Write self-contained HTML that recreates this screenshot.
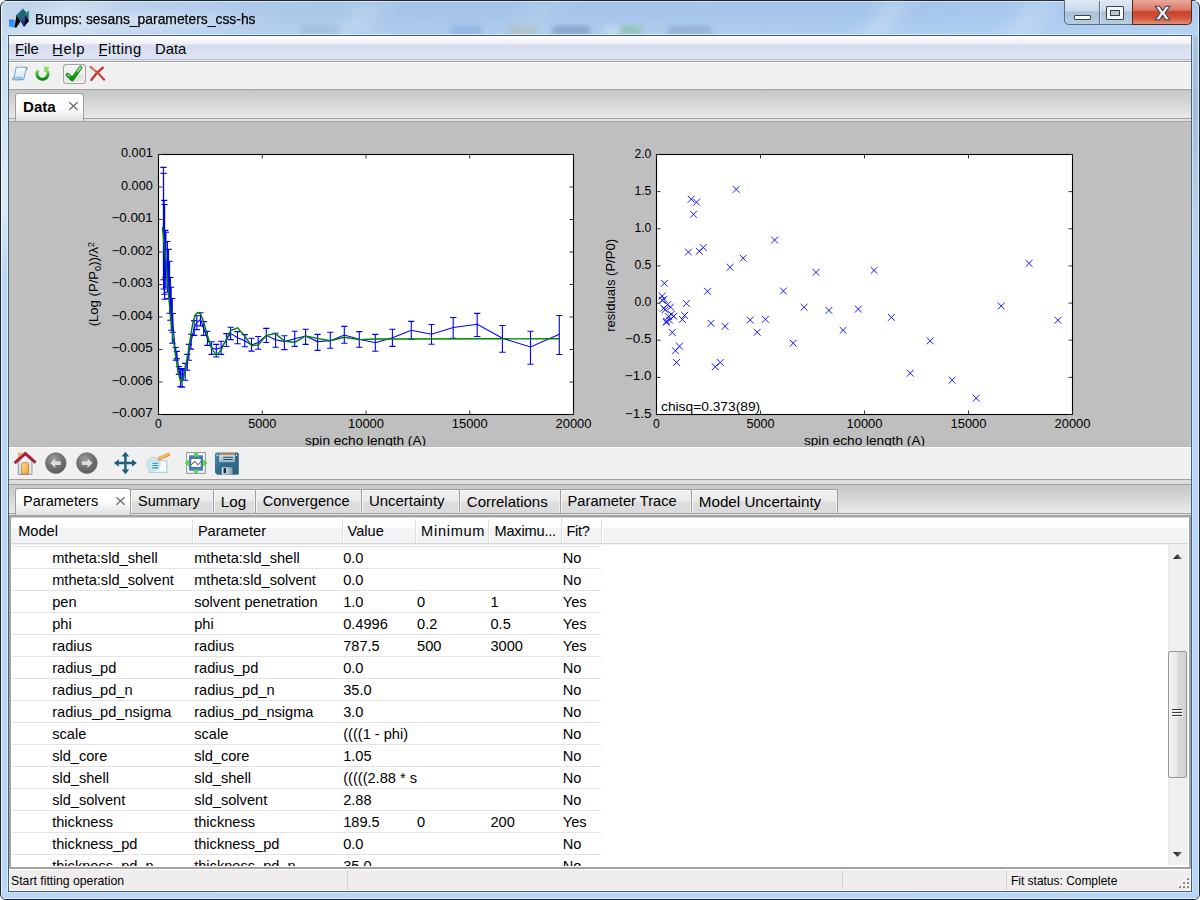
<!DOCTYPE html>
<html><head><meta charset="utf-8"><style>
*{margin:0;padding:0;box-sizing:border-box}
html,body{width:1200px;height:900px;overflow:hidden;background:#fff}
body{position:relative;font-family:"Liberation Sans",sans-serif;color:#000}
.a{position:absolute}
.t{position:absolute;white-space:nowrap;line-height:1}
u{text-decoration:none;border-bottom:1px solid #000;display:inline-block;line-height:1;padding-bottom:0}
</style></head>
<body>
<div class="a" style="left:0px;top:0px;width:1200px;height:900px;background:linear-gradient(90deg,#c6daef 0px,#bfd6ef 120px,#b0cdee 260px,#a7c7eb 420px,#a9c9ed 700px,#a8c9ee 900px,#afd0f3 1200px);border:1px solid #1b2631;border-radius:7px 7px 6px 6px"></div>
<div class="a" style="left:1px;top:1px;width:1198px;height:34px;background:linear-gradient(180deg,rgba(20,50,90,0.03) 0,rgba(20,50,90,0.02) 40%,rgba(255,255,255,0.10) 100%);border-radius:6px 6px 0 0"></div>
<div class="a" style="left:1px;top:36px;width:1198px;height:863px;background:linear-gradient(90deg,#b9d7f6,#b7d7f9);border-radius:0 0 5px 5px"></div>
<div class="a" style="left:2px;top:36px;width:6px;height:240px;background:linear-gradient(180deg,#c4dcf2 0,#d2e5f6 40%,#dbeaf7 70%,#b9d7f6 100%)"></div>
<div class="a" style="left:1193px;top:36px;width:5px;height:240px;background:linear-gradient(180deg,#a9c6e4 0,#9fbcda 30%,#b0cbe6 60%,#b7d7f9 100%)"></div>
<div class="a" style="left:7px;top:36px;width:1px;height:856px;background:rgba(230,242,253,0.7)"></div>
<div class="a" style="left:1192px;top:36px;width:1px;height:856px;background:rgba(230,242,253,0.6)"></div>
<div class="a" style="left:8px;top:892px;width:1184px;height:1px;background:rgba(230,242,253,0.6)"></div>
<div class="a" style="left:20px;top:2px;width:90px;height:33px;background:linear-gradient(90deg,rgba(255,255,255,0),rgba(255,255,255,0.3),rgba(255,255,255,0));transform:skewX(-35deg);filter:blur(4px)"></div>
<div class="a" style="left:330px;top:2px;width:60px;height:33px;background:linear-gradient(90deg,rgba(255,255,255,0),rgba(255,255,255,0.18),rgba(255,255,255,0));transform:skewX(-35deg);filter:blur(4px)"></div>
<div class="a" style="left:500px;top:2px;width:70px;height:33px;background:linear-gradient(90deg,rgba(255,255,255,0),rgba(255,255,255,0.12),rgba(255,255,255,0));transform:skewX(-35deg);filter:blur(4px)"></div>
<div class="a" style="left:860px;top:2px;width:50px;height:33px;background:linear-gradient(90deg,rgba(255,255,255,0),rgba(255,255,255,0.22),rgba(255,255,255,0));transform:skewX(-35deg);filter:blur(4px)"></div>
<div class="a" style="left:1000px;top:2px;width:60px;height:33px;background:linear-gradient(90deg,rgba(255,255,255,0),rgba(255,255,255,0.2),rgba(255,255,255,0));transform:skewX(-35deg);filter:blur(4px)"></div>
<div class="a" style="left:30px;top:8px;width:240px;height:24px;background:radial-gradient(ellipse at center,rgba(255,255,255,0.35),rgba(255,255,255,0) 70%)"></div>
<div class="a" style="left:2px;top:1px;width:1196px;height:1px;background:rgba(255,255,255,0.55)"></div>
<div class="a" style="left:1px;top:6px;width:1px;height:888px;background:rgba(255,255,255,0.8)"></div>
<div class="a" style="left:1198px;top:6px;width:1px;height:888px;background:rgba(255,255,255,0.55)"></div>
<div class="a" style="left:4px;top:898px;width:1192px;height:1px;background:rgba(255,255,255,0.6)"></div>
<div class="a" style="left:300px;top:26px;width:40px;height:9px;background:rgba(70,100,150,0.14);filter:blur(2.5px);border-radius:4px"></div>
<div class="a" style="left:450px;top:26px;width:32px;height:9px;background:rgba(60,110,200,0.22);filter:blur(2.5px);border-radius:4px"></div>
<div class="a" style="left:507px;top:26px;width:30px;height:9px;background:rgba(150,160,90,0.22);filter:blur(2.5px);border-radius:4px"></div>
<div class="a" style="left:552px;top:26px;width:38px;height:9px;background:rgba(50,80,130,0.30);filter:blur(2.5px);border-radius:4px"></div>
<div class="a" style="left:605px;top:26px;width:38px;height:9px;background:rgba(230,240,245,0.35);filter:blur(2.5px);border-radius:4px"></div>
<div class="a" style="left:620px;top:26px;width:22px;height:9px;background:rgba(40,150,60,0.30);filter:blur(2.5px);border-radius:4px"></div>
<div class="a" style="left:667px;top:26px;width:45px;height:9px;background:rgba(70,90,120,0.22);filter:blur(2.5px);border-radius:4px"></div>
<div class="a" style="left:9px;top:34px;width:1182px;height:1px;background:rgba(225,240,252,0.7)"></div>
<div class="a" style="left:8px;top:35px;width:1184px;height:857px;background:#f0f0f0;border:1px solid #4e5e6e"></div>
<div class="t" style="left:35px;top:10.8px;font-size:15px;transform:scaleX(0.925);transform-origin:0 0;color:#000;-webkit-text-stroke:0.25px #000">Bumps: sesans_parameters_css-hs</div>
<div class="a" style="left:9px;top:36px;width:1182px;height:23px;background:linear-gradient(180deg,#ffffff 0px,#eceff8 8px,#d6dcef 9px,#dee3f4 22px)"></div>
<div class="a" style="left:9px;top:59px;width:1182px;height:1px;background:#b8bfd6"></div>
<div class="a" style="left:9px;top:60px;width:1182px;height:1px;background:#e6e6e6"></div>
<div class="a" style="left:9px;top:61px;width:1182px;height:1px;background:#a0a0a0"></div>
<div class="a" style="left:9px;top:62px;width:1182px;height:1px;background:#ffffff"></div>
<div class="t" style="left:15px;top:41.96px;font-size:14.8px;letter-spacing:0px">File</div>
<div class="a" style="left:15.5px;top:55px;width:8px;height:1px;background:#000"></div>
<div class="t" style="left:52px;top:41.96px;font-size:14.8px;letter-spacing:0.7px">Help</div>
<div class="a" style="left:52.5px;top:55px;width:10px;height:1px;background:#000"></div>
<div class="t" style="left:98.5px;top:41.96px;font-size:14.8px;letter-spacing:0.4px">Fitting</div>
<div class="a" style="left:99.0px;top:55px;width:8px;height:1px;background:#000"></div>
<div class="t" style="left:155px;top:41.96px;font-size:14.8px;letter-spacing:0px">Data</div>
<div class="a" style="left:9px;top:88px;width:1182px;height:1px;background:#f6f6f6"></div>
<div class="a" style="left:9px;top:89px;width:1182px;height:1px;background:#a0a0a0"></div>
<div class="a" style="left:63px;top:64px;width:23px;height:20px;border:1px solid #9a9a9a;border-radius:3px;background:linear-gradient(180deg,#fafafa 0,#f0f0f0 50%,#e0e0e0 51%,#ececec 100%)"></div>
<div class="a" style="left:9px;top:90px;width:1182px;height:28px;background:linear-gradient(180deg,#c6c6c6,#e9e9e9)"></div>
<div class="a" style="left:9px;top:118px;width:1182px;height:1px;background:#a0a0a0"></div>
<div class="a" style="left:9px;top:119px;width:1182px;height:2px;background:#e2e2e2"></div>
<div class="a" style="left:9px;top:121px;width:1182px;height:1px;background:#a3a3a3"></div>
<div class="a" style="left:15px;top:93px;width:69px;height:28px;border:1px solid #a0a0a0;border-bottom:none;border-radius:3px 3px 0 0;background:linear-gradient(180deg,#ffffff 0,#ffffff 50%,#e2e2e2 100%)"></div>
<div class="t" style="left:23px;top:98.62px;font-size:15.1px;font-weight:bold">Data</div>
<div class="a" style="left:9px;top:122px;width:1182px;height:324px;background:#bfbfbf"></div>
<div class="a" style="left:9px;top:446px;width:1182px;height:1px;background:#b4b4b4"></div>
<div class="a" style="left:9px;top:447px;width:1182px;height:1px;background:#ffffff"></div>
<div class="a" style="left:9px;top:448px;width:1182px;height:31px;background:#f0f0f0"></div>
<div class="a" style="left:9px;top:479px;width:1182px;height:1px;background:#a0a0a0"></div>
<div class="a" style="left:9px;top:480px;width:1182px;height:4px;background:#dcdcdc"></div>
<div class="a" style="left:9px;top:484px;width:1182px;height:1px;background:#a0a0a0"></div>
<div class="a" style="left:9px;top:485px;width:1182px;height:28px;background:linear-gradient(180deg,#c6c6c6,#e9e9e9)"></div>
<div class="a" style="left:130px;top:489px;width:84px;height:25px;border:1px solid #a0a0a0;border-bottom:none;border-radius:2px 2px 0 0;background:linear-gradient(180deg,#f0f0f0 0,#ebebeb 11px,#dddddd 12px,#dadada 100%)"></div><div class="a" style="left:131px;top:490px;width:1px;height:23px;background:#f6f6f6"></div><div class="a" style="left:131px;top:490px;width:82px;height:1px;background:#f8f8f8"></div><div class="a" style="left:212px;top:490px;width:1px;height:23px;background:#eeeeee"></div><div class="t" style="left:138.0px;top:494.34px;font-size:14.45px;">Summary</div>
<div class="a" style="left:213px;top:489px;width:43px;height:25px;border:1px solid #a0a0a0;border-bottom:none;border-radius:2px 2px 0 0;background:linear-gradient(180deg,#f0f0f0 0,#ebebeb 11px,#dddddd 12px,#dadada 100%)"></div><div class="a" style="left:214px;top:490px;width:1px;height:23px;background:#f6f6f6"></div><div class="a" style="left:214px;top:490px;width:41px;height:1px;background:#f8f8f8"></div><div class="a" style="left:254px;top:490px;width:1px;height:23px;background:#eeeeee"></div><div class="t" style="left:220.8px;top:493.74px;font-size:15.2px;">Log</div>
<div class="a" style="left:255px;top:489px;width:107px;height:25px;border:1px solid #a0a0a0;border-bottom:none;border-radius:2px 2px 0 0;background:linear-gradient(180deg,#f0f0f0 0,#ebebeb 11px,#dddddd 12px,#dadada 100%)"></div><div class="a" style="left:256px;top:490px;width:1px;height:23px;background:#f6f6f6"></div><div class="a" style="left:256px;top:490px;width:105px;height:1px;background:#f8f8f8"></div><div class="a" style="left:360px;top:490px;width:1px;height:23px;background:#eeeeee"></div><div class="t" style="left:262.8px;top:494.22px;font-size:14.6px;">Convergence</div>
<div class="a" style="left:361px;top:489px;width:99px;height:25px;border:1px solid #a0a0a0;border-bottom:none;border-radius:2px 2px 0 0;background:linear-gradient(180deg,#f0f0f0 0,#ebebeb 11px,#dddddd 12px,#dadada 100%)"></div><div class="a" style="left:362px;top:490px;width:1px;height:23px;background:#f6f6f6"></div><div class="a" style="left:362px;top:490px;width:97px;height:1px;background:#f8f8f8"></div><div class="a" style="left:458px;top:490px;width:1px;height:23px;background:#eeeeee"></div><div class="t" style="left:369.0px;top:493.94px;font-size:14.95px;">Uncertainty</div>
<div class="a" style="left:459px;top:489px;width:102px;height:25px;border:1px solid #a0a0a0;border-bottom:none;border-radius:2px 2px 0 0;background:linear-gradient(180deg,#f0f0f0 0,#ebebeb 11px,#dddddd 12px,#dadada 100%)"></div><div class="a" style="left:460px;top:490px;width:1px;height:23px;background:#f6f6f6"></div><div class="a" style="left:460px;top:490px;width:100px;height:1px;background:#f8f8f8"></div><div class="a" style="left:559px;top:490px;width:1px;height:23px;background:#eeeeee"></div><div class="t" style="left:466.8px;top:493.90px;font-size:15.0px;">Correlations</div>
<div class="a" style="left:560px;top:489px;width:132px;height:25px;border:1px solid #a0a0a0;border-bottom:none;border-radius:2px 2px 0 0;background:linear-gradient(180deg,#f0f0f0 0,#ebebeb 11px,#dddddd 12px,#dadada 100%)"></div><div class="a" style="left:561px;top:490px;width:1px;height:23px;background:#f6f6f6"></div><div class="a" style="left:561px;top:490px;width:130px;height:1px;background:#f8f8f8"></div><div class="a" style="left:690px;top:490px;width:1px;height:23px;background:#eeeeee"></div><div class="t" style="left:567.6px;top:494.18px;font-size:14.65px;">Parameter Trace</div>
<div class="a" style="left:691px;top:489px;width:147px;height:25px;border:1px solid #a0a0a0;border-bottom:none;border-radius:2px 2px 0 0;background:linear-gradient(180deg,#f0f0f0 0,#ebebeb 11px,#dddddd 12px,#dadada 100%)"></div><div class="a" style="left:692px;top:490px;width:1px;height:23px;background:#f6f6f6"></div><div class="a" style="left:692px;top:490px;width:145px;height:1px;background:#f8f8f8"></div><div class="a" style="left:836px;top:490px;width:1px;height:23px;background:#eeeeee"></div><div class="t" style="left:698.8px;top:493.74px;font-size:15.2px;">Model Uncertainty</div>
<div class="a" style="left:9px;top:513px;width:1182px;height:1px;background:#a0a0a0"></div>
<div class="a" style="left:9px;top:514px;width:1182px;height:1px;background:#e3e3e3"></div>
<div class="a" style="left:15px;top:488px;width:116px;height:27px;border:1px solid #a0a0a0;border-bottom:none;border-radius:3px 3px 0 0;background:linear-gradient(180deg,#ffffff 0,#ffffff 45%,#e0e0e0 100%)"></div>
<div class="t" style="left:23px;top:494.26px;font-size:14.55px;">Parameters</div>
<div class="a" style="left:9px;top:515px;width:1182px;height:354px;background:#fff;border:2px solid #a3a3a3"></div>
<div class="a" style="left:11px;top:517px;width:1177px;height:1px;background:#d2d2d2"></div>
<div class="a" style="left:11px;top:518px;width:1177px;height:25px;background:linear-gradient(180deg,#ffffff 0,#ffffff 9px,#f3f4f6 10px,#f1f2f4 100%)"></div>
<div class="a" style="left:11px;top:543px;width:1177px;height:1px;background:#d5d5d5"></div>
<div class="a" style="left:11px;top:544px;width:1177px;height:1px;background:#f0f0f0"></div>
<div class="a" style="left:192px;top:519px;width:1px;height:24px;background:#dedede"></div>
<div class="a" style="left:193px;top:519px;width:1px;height:24px;background:#ffffff"></div>
<div class="a" style="left:342px;top:519px;width:1px;height:24px;background:#dedede"></div>
<div class="a" style="left:343px;top:519px;width:1px;height:24px;background:#ffffff"></div>
<div class="a" style="left:415px;top:519px;width:1px;height:24px;background:#dedede"></div>
<div class="a" style="left:416px;top:519px;width:1px;height:24px;background:#ffffff"></div>
<div class="a" style="left:488px;top:519px;width:1px;height:24px;background:#dedede"></div>
<div class="a" style="left:489px;top:519px;width:1px;height:24px;background:#ffffff"></div>
<div class="a" style="left:561px;top:519px;width:1px;height:24px;background:#dedede"></div>
<div class="a" style="left:562px;top:519px;width:1px;height:24px;background:#ffffff"></div>
<div class="a" style="left:601px;top:519px;width:1px;height:24px;background:#dedede"></div>
<div class="a" style="left:602px;top:519px;width:1px;height:24px;background:#ffffff"></div>
<div class="t" style="left:18.2px;top:524.02px;font-size:14.6px;letter-spacing:0px">Model</div>
<div class="t" style="left:197.9px;top:524.02px;font-size:14.6px;letter-spacing:0px">Parameter</div>
<div class="t" style="left:347.5px;top:524.02px;font-size:14.6px;letter-spacing:0px">Value</div>
<div class="t" style="left:421.1px;top:524.02px;font-size:14.6px;letter-spacing:0.7px">Minimum</div>
<div class="t" style="left:494.5px;top:524.02px;font-size:14.6px;letter-spacing:-0.2px">Maximu...</div>
<div class="t" style="left:566.5px;top:524.02px;font-size:14.6px;letter-spacing:-0.3px">Fit?</div>
<div class="a" style="left:12px;top:546px;width:589px;height:1px;background:#e3e3e3"></div>
<div class="a" style="left:12px;top:546px;width:1156px;height:22px;overflow:hidden"><div class="a" style="left:-12px;top:0;width:1200px;height:22px"><div class="t" style="left:52.2px;top:4.92px;font-size:14.6px;">mtheta:sld_shell</div><div class="t" style="left:194.2px;top:4.92px;font-size:14.6px;">mtheta:sld_shell</div><div class="t" style="left:343.2px;top:4.92px;font-size:14.6px;">0.0</div><div class="t" style="left:562.8px;top:4.92px;font-size:14.6px;">No</div></div></div>
<div class="a" style="left:12px;top:568px;width:589px;height:1px;background:#e3e3e3"></div>
<div class="a" style="left:12px;top:568px;width:1156px;height:22px;overflow:hidden"><div class="a" style="left:-12px;top:0;width:1200px;height:22px"><div class="t" style="left:52.2px;top:4.92px;font-size:14.6px;">mtheta:sld_solvent</div><div class="t" style="left:194.2px;top:4.92px;font-size:14.6px;">mtheta:sld_solvent</div><div class="t" style="left:343.2px;top:4.92px;font-size:14.6px;">0.0</div><div class="t" style="left:562.8px;top:4.92px;font-size:14.6px;">No</div></div></div>
<div class="a" style="left:12px;top:590px;width:589px;height:1px;background:#e3e3e3"></div>
<div class="a" style="left:12px;top:590px;width:1156px;height:22px;overflow:hidden"><div class="a" style="left:-12px;top:0;width:1200px;height:22px"><div class="t" style="left:52.2px;top:4.92px;font-size:14.6px;">pen</div><div class="t" style="left:194.2px;top:4.92px;font-size:14.6px;">solvent penetration</div><div class="t" style="left:343.2px;top:4.92px;font-size:14.6px;">1.0</div><div class="t" style="left:417.1px;top:4.92px;font-size:14.6px;">0</div><div class="t" style="left:490.5px;top:4.92px;font-size:14.6px;">1</div><div class="t" style="left:562.8px;top:4.92px;font-size:14.6px;">Yes</div></div></div>
<div class="a" style="left:12px;top:612px;width:589px;height:1px;background:#e3e3e3"></div>
<div class="a" style="left:12px;top:612px;width:1156px;height:22px;overflow:hidden"><div class="a" style="left:-12px;top:0;width:1200px;height:22px"><div class="t" style="left:52.2px;top:4.92px;font-size:14.6px;">phi</div><div class="t" style="left:194.2px;top:4.92px;font-size:14.6px;">phi</div><div class="t" style="left:343.2px;top:4.92px;font-size:14.6px;">0.4996</div><div class="t" style="left:417.1px;top:4.92px;font-size:14.6px;">0.2</div><div class="t" style="left:490.5px;top:4.92px;font-size:14.6px;">0.5</div><div class="t" style="left:562.8px;top:4.92px;font-size:14.6px;">Yes</div></div></div>
<div class="a" style="left:12px;top:634px;width:589px;height:1px;background:#e3e3e3"></div>
<div class="a" style="left:12px;top:634px;width:1156px;height:22px;overflow:hidden"><div class="a" style="left:-12px;top:0;width:1200px;height:22px"><div class="t" style="left:52.2px;top:4.92px;font-size:14.6px;">radius</div><div class="t" style="left:194.2px;top:4.92px;font-size:14.6px;">radius</div><div class="t" style="left:343.2px;top:4.92px;font-size:14.6px;">787.5</div><div class="t" style="left:417.1px;top:4.92px;font-size:14.6px;">500</div><div class="t" style="left:490.5px;top:4.92px;font-size:14.6px;">3000</div><div class="t" style="left:562.8px;top:4.92px;font-size:14.6px;">Yes</div></div></div>
<div class="a" style="left:12px;top:656px;width:589px;height:1px;background:#e3e3e3"></div>
<div class="a" style="left:12px;top:656px;width:1156px;height:22px;overflow:hidden"><div class="a" style="left:-12px;top:0;width:1200px;height:22px"><div class="t" style="left:52.2px;top:4.92px;font-size:14.6px;">radius_pd</div><div class="t" style="left:194.2px;top:4.92px;font-size:14.6px;">radius_pd</div><div class="t" style="left:343.2px;top:4.92px;font-size:14.6px;">0.0</div><div class="t" style="left:562.8px;top:4.92px;font-size:14.6px;">No</div></div></div>
<div class="a" style="left:12px;top:678px;width:589px;height:1px;background:#e3e3e3"></div>
<div class="a" style="left:12px;top:678px;width:1156px;height:22px;overflow:hidden"><div class="a" style="left:-12px;top:0;width:1200px;height:22px"><div class="t" style="left:52.2px;top:4.92px;font-size:14.6px;">radius_pd_n</div><div class="t" style="left:194.2px;top:4.92px;font-size:14.6px;">radius_pd_n</div><div class="t" style="left:343.2px;top:4.92px;font-size:14.6px;">35.0</div><div class="t" style="left:562.8px;top:4.92px;font-size:14.6px;">No</div></div></div>
<div class="a" style="left:12px;top:700px;width:589px;height:1px;background:#e3e3e3"></div>
<div class="a" style="left:12px;top:700px;width:1156px;height:22px;overflow:hidden"><div class="a" style="left:-12px;top:0;width:1200px;height:22px"><div class="t" style="left:52.2px;top:4.92px;font-size:14.6px;">radius_pd_nsigma</div><div class="t" style="left:194.2px;top:4.92px;font-size:14.6px;">radius_pd_nsigma</div><div class="t" style="left:343.2px;top:4.92px;font-size:14.6px;">3.0</div><div class="t" style="left:562.8px;top:4.92px;font-size:14.6px;">No</div></div></div>
<div class="a" style="left:12px;top:722px;width:589px;height:1px;background:#e3e3e3"></div>
<div class="a" style="left:12px;top:722px;width:1156px;height:22px;overflow:hidden"><div class="a" style="left:-12px;top:0;width:1200px;height:22px"><div class="t" style="left:52.2px;top:4.92px;font-size:14.6px;">scale</div><div class="t" style="left:194.2px;top:4.92px;font-size:14.6px;">scale</div><div class="t" style="left:343.2px;top:4.92px;font-size:14.6px;">((((1 - phi)</div><div class="t" style="left:562.8px;top:4.92px;font-size:14.6px;">No</div></div></div>
<div class="a" style="left:12px;top:744px;width:589px;height:1px;background:#e3e3e3"></div>
<div class="a" style="left:12px;top:744px;width:1156px;height:22px;overflow:hidden"><div class="a" style="left:-12px;top:0;width:1200px;height:22px"><div class="t" style="left:52.2px;top:4.92px;font-size:14.6px;">sld_core</div><div class="t" style="left:194.2px;top:4.92px;font-size:14.6px;">sld_core</div><div class="t" style="left:343.2px;top:4.92px;font-size:14.6px;">1.05</div><div class="t" style="left:562.8px;top:4.92px;font-size:14.6px;">No</div></div></div>
<div class="a" style="left:12px;top:766px;width:589px;height:1px;background:#e3e3e3"></div>
<div class="a" style="left:12px;top:766px;width:1156px;height:22px;overflow:hidden"><div class="a" style="left:-12px;top:0;width:1200px;height:22px"><div class="t" style="left:52.2px;top:4.92px;font-size:14.6px;">sld_shell</div><div class="t" style="left:194.2px;top:4.92px;font-size:14.6px;">sld_shell</div><div class="t" style="left:343.2px;top:4.92px;font-size:14.6px;">(((((2.88 * s</div><div class="t" style="left:562.8px;top:4.92px;font-size:14.6px;">No</div></div></div>
<div class="a" style="left:12px;top:788px;width:589px;height:1px;background:#e3e3e3"></div>
<div class="a" style="left:12px;top:788px;width:1156px;height:22px;overflow:hidden"><div class="a" style="left:-12px;top:0;width:1200px;height:22px"><div class="t" style="left:52.2px;top:4.92px;font-size:14.6px;">sld_solvent</div><div class="t" style="left:194.2px;top:4.92px;font-size:14.6px;">sld_solvent</div><div class="t" style="left:343.2px;top:4.92px;font-size:14.6px;">2.88</div><div class="t" style="left:562.8px;top:4.92px;font-size:14.6px;">No</div></div></div>
<div class="a" style="left:12px;top:810px;width:589px;height:1px;background:#e3e3e3"></div>
<div class="a" style="left:12px;top:810px;width:1156px;height:22px;overflow:hidden"><div class="a" style="left:-12px;top:0;width:1200px;height:22px"><div class="t" style="left:52.2px;top:4.92px;font-size:14.6px;">thickness</div><div class="t" style="left:194.2px;top:4.92px;font-size:14.6px;">thickness</div><div class="t" style="left:343.2px;top:4.92px;font-size:14.6px;">189.5</div><div class="t" style="left:417.1px;top:4.92px;font-size:14.6px;">0</div><div class="t" style="left:490.5px;top:4.92px;font-size:14.6px;">200</div><div class="t" style="left:562.8px;top:4.92px;font-size:14.6px;">Yes</div></div></div>
<div class="a" style="left:12px;top:832px;width:589px;height:1px;background:#e3e3e3"></div>
<div class="a" style="left:12px;top:832px;width:1156px;height:22px;overflow:hidden"><div class="a" style="left:-12px;top:0;width:1200px;height:22px"><div class="t" style="left:52.2px;top:4.92px;font-size:14.6px;">thickness_pd</div><div class="t" style="left:194.2px;top:4.92px;font-size:14.6px;">thickness_pd</div><div class="t" style="left:343.2px;top:4.92px;font-size:14.6px;">0.0</div><div class="t" style="left:562.8px;top:4.92px;font-size:14.6px;">No</div></div></div>
<div class="a" style="left:12px;top:854px;width:589px;height:1px;background:#e3e3e3"></div>
<div class="a" style="left:12px;top:854px;width:1156px;height:12px;overflow:hidden"><div class="a" style="left:-12px;top:0;width:1200px;height:22px"><div class="t" style="left:52.2px;top:4.92px;font-size:14.6px;">thickness_pd_n</div><div class="t" style="left:194.2px;top:4.92px;font-size:14.6px;">thickness_pd_n</div><div class="t" style="left:343.2px;top:4.92px;font-size:14.6px;">35.0</div><div class="t" style="left:562.8px;top:4.92px;font-size:14.6px;">No</div></div></div>
<div class="a" style="left:1168px;top:545px;width:20px;height:320px;background:linear-gradient(90deg,#e8e8e8 0,#f0f0f0 2px,#f0f0f0 100%)"></div>
<div class="a" style="left:1168px;top:651px;width:19px;height:127px;border:1px solid #979797;border-radius:2px;background:linear-gradient(90deg,#f3f3f3 0,#e9e9e9 45%,#d9d9d9 55%,#d2d2d2 100%)"></div>
<div class="a" style="left:1172px;top:709px;width:10px;height:1px;background:#3a3a3a"></div>
<div class="a" style="left:1173px;top:710px;width:10px;height:1px;background:#ffffff"></div>
<div class="a" style="left:1172px;top:712px;width:10px;height:1px;background:#3a3a3a"></div>
<div class="a" style="left:1173px;top:713px;width:10px;height:1px;background:#ffffff"></div>
<div class="a" style="left:1172px;top:715px;width:10px;height:1px;background:#3a3a3a"></div>
<div class="a" style="left:1173px;top:716px;width:10px;height:1px;background:#ffffff"></div>
<svg class="a" style="left:1168px;top:545px" width="20" height="320"><defs><linearGradient id="ag" x1="0" x2="1"><stop offset="0" stop-color="#111"/><stop offset="1" stop-color="#777"/></linearGradient></defs><path d="M5 14 L14 14 L9.5 9 Z" fill="url(#ag)"/><path d="M5 307 L14 307 L9.5 312 Z" fill="url(#ag)"/></svg>
<div class="a" style="left:9px;top:869px;width:1182px;height:22px;background:#efeded;border:1px solid #fff"></div>
<div class="a" style="left:347px;top:871px;width:1px;height:19px;background:#d4d0d0"></div>
<div class="a" style="left:842px;top:871px;width:1px;height:19px;background:#d4d0d0"></div>
<div class="a" style="left:1006px;top:871px;width:1px;height:19px;background:#d4d0d0"></div>
<div class="t" style="left:11px;top:874.90px;font-size:12.25px;">Start fitting operation</div>
<div class="t" style="left:1011px;top:875.93px;font-size:11.96px;">Fit status: Complete</div>
<div class="a" style="left:1187px;top:878px;width:2px;height:2px;background:#8a8a8a;box-shadow:-1px -1px 0 #ffffff"></div>
<div class="a" style="left:1183px;top:882px;width:2px;height:2px;background:#8a8a8a;box-shadow:-1px -1px 0 #ffffff"></div>
<div class="a" style="left:1187px;top:882px;width:2px;height:2px;background:#8a8a8a;box-shadow:-1px -1px 0 #ffffff"></div>
<div class="a" style="left:1179px;top:886px;width:2px;height:2px;background:#8a8a8a;box-shadow:-1px -1px 0 #ffffff"></div>
<div class="a" style="left:1183px;top:886px;width:2px;height:2px;background:#8a8a8a;box-shadow:-1px -1px 0 #ffffff"></div>
<div class="a" style="left:1187px;top:886px;width:2px;height:2px;background:#8a8a8a;box-shadow:-1px -1px 0 #ffffff"></div>
<div class="a" style="left:1064px;top:0px;width:69px;height:25px;border:1px solid #5a6e82;border-top:none;border-radius:0 0 0 5px;background:linear-gradient(180deg,#dfe9f4 0,#c9d9ea 45%,#a9c0d8 50%,#b7cde2 100%)"></div>
<div class="a" style="left:1099px;top:1px;width:1px;height:23px;background:#5a6e82"></div>
<div class="a" style="left:1100px;top:1px;width:1px;height:23px;background:rgba(255,255,255,0.5)"></div>
<div class="a" style="left:1132px;top:0px;width:60px;height:25px;border:1px solid #5a2418;border-top:none;border-radius:0 0 5px 0;background:linear-gradient(180deg,#eaa89c 0,#db7b6a 40%,#c8432b 50%,#d4553a 75%,#e0917e 100%)"></div>
<div class="a" style="left:1074px;top:15px;width:17px;height:5px;background:#fff;border:1px solid #38424c;border-radius:1px"></div>
<div class="a" style="left:1106px;top:6px;width:18px;height:14px;border:1px solid #38424c;border-radius:1px;background:transparent;box-shadow:inset 0 0 0 3px #f4f6f8"></div>
<div class="a" style="left:1110px;top:10px;width:10px;height:6px;border:1px solid #38424c;background:#b5c9dd"></div>
<svg class="a" style="left:1150px;top:3px" width="26" height="20"><polygon points="5.2,3.2 9.6,3.2 12.6,7.6 15.6,3.2 20,3.2 15,10 20,16.8 15.6,16.8 12.6,12.4 9.6,16.8 5.2,16.8 10.2,10" fill="#f2f2f2" stroke="#3a4552" stroke-width="1.1" stroke-linejoin="round"/></svg>
<svg class="a" style="left:0;top:0" width="1200" height="900">
<defs><clipPath id="cl"><rect x="159" y="155" width="414" height="259"/></clipPath><clipPath id="cr"><rect x="657" y="155" width="415" height="259"/></clipPath><clipPath id="fig"><rect x="9" y="122" width="1182" height="324"/></clipPath></defs>
<rect x="158.5" y="154.5" width="415" height="260" fill="#fff" stroke="#000" stroke-width="1.1"/>
<rect x="656.5" y="154.5" width="416" height="260" fill="#fff" stroke="#000" stroke-width="1.1"/>
<g clip-path="url(#cl)" fill="none" stroke="#0000ff" stroke-width="1.1">
<path d="M163.4 167.4V279.8M160.3 167.4H166.5M160.3 279.8H166.5M163.6 173.4V289.0M160.5 173.4H166.7M160.5 289.0H166.7M164.2 200.4V294.3M161.1 200.4H167.3M161.1 294.3H167.3M164.6 204.5V299.3M161.5 204.5H167.7M161.5 299.3H167.7M165.3 230.4V277.5M162.2 230.4H168.4M162.2 277.5H168.4M165.9 232.3V287.3M162.8 232.3H169.0M162.8 287.3H169.0M167.4 241.5V292.3M164.3 241.5H170.5M164.3 292.3H170.5M168.5 249.4V298.5M165.4 249.4H171.6M165.4 298.5H171.6M169.6 261.3V313.3M166.5 261.3H172.7M166.5 313.3H172.7M170.4 277.5V320.3M167.3 277.5H173.5M167.3 320.3H173.5M171.2 287.3V330.3M168.1 287.3H174.3M168.1 330.3H174.3M172.3 298.5V343.3M169.2 298.5H175.4M169.2 343.3H175.4M172.8 313.5V332.2M169.7 313.5H175.9M169.7 332.2H175.9M175.7 347.5V360.2M172.6 347.5H178.8M172.6 360.2H178.8M176.8 351.4V358.6M173.7 351.4H179.9M173.7 358.6H179.9M178.9 366.5V374.4M175.8 366.5H182.0M175.8 374.4H182.0M180.4 368.6V386.6M177.3 368.6H183.5M177.3 386.6H183.5M182.0 368.6V387.1M178.9 368.6H185.1M178.9 387.1H185.1M183.1 369.7V380.3M180.0 369.7H186.2M180.0 380.3H186.2M185.2 363.4V380.3M182.1 363.4H188.3M182.1 380.3H188.3M187.3 354.4V370.2M184.2 354.4H190.4M184.2 370.2H190.4M188.9 344.4V360.2M185.8 344.4H192.0M185.8 360.2H192.0M191.0 334.3V349.1M187.9 334.3H194.1M187.9 349.1H194.1M194.2 320.6V335.4M191.1 320.6H197.3M191.1 335.4H197.3M196.8 315.8V329.6M193.7 315.8H199.9M193.7 329.6H199.9M200.5 312.7V325.9M197.4 312.7H203.6M197.4 325.9H203.6M203.7 321.6V335.4M200.6 321.6H206.8M200.6 335.4H206.8M207.4 331.2V345.4M204.3 331.2H210.5M204.3 345.4H210.5M211.6 341.7V354.4M208.5 341.7H214.7M208.5 354.4H214.7M216.3 344.4V357.0M213.2 344.4H219.4M213.2 357.0H219.4M221.1 341.2V354.4M218.0 341.2H224.2M218.0 354.4H224.2M226.4 333.6V346.5M223.3 333.6H229.5M223.3 346.5H229.5M230.6 327.2V339.6M227.5 327.2H233.7M227.5 339.6H233.7M237.5 331.6V343.8M234.4 331.6H240.6M234.4 343.8H240.6M244.8 334.6V346.8M241.7 334.6H247.9M241.7 346.8H247.9M251.5 338.3V351.1M248.4 338.3H254.6M248.4 351.1H254.6M258.2 336.5V349.3M255.1 336.5H261.3M255.1 349.3H261.3M266.3 328.4V342.5M263.2 328.4H269.4M263.2 342.5H269.4M275.6 333.3V347.3M272.5 333.3H278.7M272.5 347.3H278.7M284.4 335.7V349.6M281.3 335.7H287.5M281.3 349.6H287.5M294.7 331.3V346.4M291.6 331.3H297.8M291.6 346.4H297.8M305.6 329.3V344.4M302.5 329.3H308.7M302.5 344.4H308.7M317.6 334.4V350.4M314.5 334.4H320.7M314.5 350.4H320.7M330.3 332.3V348.3M327.2 332.3H333.4M327.2 348.3H333.4M344.3 326.4V343.3M341.2 326.4H347.4M341.2 343.3H347.4M359.3 331.6V347.3M356.2 331.6H362.4M356.2 347.3H362.4M375.3 334.4V351.3M372.2 334.4H378.4M372.2 351.3H378.4M392.4 329.3V346.4M389.3 329.3H395.5M389.3 346.4H395.5M411.3 321.4V339.3M408.2 321.4H414.4M408.2 339.3H414.4M431.5 324.5V344.3M428.4 324.5H434.6M428.4 344.3H434.6M453.2 317.5V338.3M450.1 317.5H456.4M450.1 338.3H456.4M477.2 313.4V336.5M474.1 313.4H480.4M474.1 336.5H480.4M502.4 325.5V352.2M499.3 325.5H505.6M499.3 352.2H505.6M530.5 331.2V364.2M527.4 331.2H533.6M527.4 364.2H533.6M559.3 315.5V354.5M556.2 315.5H562.4M556.2 354.5H562.4"/>
<polyline points="163.4,223 163.6,231 164.2,247 164.6,252 165.3,254 165.9,262 167.4,267 168.5,276 169.6,287 170.4,300 171.2,310 172.3,320 172.8,323 175.7,354 176.8,355 178.9,370 180.4,378 182.0,378 183.1,375 185.2,372 187.3,362 188.9,352 191.0,342 194.2,328 196.8,322.7 200.5,319.5 203.7,328.5 207.4,338.3 211.6,348 216.3,349.1 221.1,347.8 226.4,340 230.6,333.4 237.5,337.7 244.8,340.7 251.5,345 258.2,342.6 266.3,335.3 275.6,339.7 284.4,341.6 294.7,338.7 305.6,336 317.6,341.6 330.3,340.7 344.3,335 359.3,339.3 375.3,342.7 392.4,337.7 411.3,330.3 431.5,334.25 453.25,327.5 477.25,324.2 502.45,338.3 530.5,347 559.3,334.25"/>
</g>
<polyline clip-path="url(#cl)" fill="none" stroke="#008000" stroke-width="1.4" points="162.4,226.9 166.3,265 169,300 172,330 175,352 178,372 181,382.4 184,376 187,360 190,340 193,322 195.5,315 197.9,312.5 200.5,314 203,320 207,334 211,347 216.3,355.4 221,350 226,340 230.6,330.6 237.5,327.9 244.8,336 251.5,345.6 258.2,345 266.4,335.3 275.3,333.6 284.4,341 294.7,342.4 305.6,336 317.6,338.4 330.3,340.7 344.3,337.3 359.3,339.6 375.3,339 392.4,339 559.3,338.75"/>
<path clip-path="url(#cr)" d="M661.0 279.9L667.8 286.7M661.0 286.7L667.8 279.9M658.8 292.6L665.6 299.4M658.8 299.4L665.6 292.6M660.6 295.8L667.4 302.6M660.6 302.6L667.4 295.8M658.8 296.9L665.6 303.7M658.8 303.7L665.6 296.9M664.2 301.2L671.0 308.0M664.2 308.0L671.0 301.2M667.1 303.7L673.9 310.5M667.1 310.5L673.9 303.7M660.3 304.8L667.1 311.6M660.3 311.6L667.1 304.8M661.7 306.3L668.5 313.1M661.7 313.1L668.5 306.3M667.8 311.0L674.6 317.8M667.8 317.8L674.6 311.0M670.4 312.8L677.2 319.6M670.4 319.6L677.2 312.8M665.3 313.1L672.1 319.9M665.3 319.9L672.1 313.1M666.0 316.7L672.8 323.5M666.0 323.5L672.8 316.7M662.8 318.9L669.6 325.7M662.8 325.7L669.6 318.9M663.2 317.8L670.0 324.6M663.2 324.6L670.0 317.8M668.9 329.0L675.7 335.8M668.9 335.8L675.7 329.0M683.0 300.1L689.8 306.9M683.0 306.9L689.8 300.1M681.2 312.0L688.0 318.8M681.2 318.8L688.0 312.0M679.0 316.0L685.8 322.8M679.0 322.8L685.8 316.0M732.8 186.0L739.6 192.8M732.8 192.8L739.6 186.0M687.8 195.8L694.6 202.6M687.8 202.6L694.6 195.8M693.1 198.8L699.9 205.6M693.1 205.6L699.9 198.8M690.1 210.9L696.9 217.7M690.1 217.7L696.9 210.9M771.2 236.7L778.0 243.5M771.2 243.5L778.0 236.7M685.0 248.7L691.8 255.5M685.0 255.5L691.8 248.7M695.9 247.8L702.7 254.6M695.9 254.6L702.7 247.8M699.9 244.1L706.7 250.9M699.9 250.9L706.7 244.1M739.8 254.8L746.6 261.6M739.8 261.6L746.6 254.8M726.7 263.9L733.5 270.7M726.7 270.7L733.5 263.9M704.1 287.9L710.9 294.7M704.1 294.7L710.9 287.9M707.6 319.9L714.4 326.7M707.6 326.7L714.4 319.9M721.6 322.9L728.4 329.7M721.6 329.7L728.4 322.9M746.8 316.6L753.6 323.4M746.8 323.4L753.6 316.6M762.0 315.9L768.8 322.7M762.0 322.7L768.8 315.9M753.8 328.8L760.6 335.6M753.8 335.6L760.6 328.8M676.1 342.8L682.9 349.6M676.1 349.6L682.9 342.8M672.1 347.4L678.9 354.2M672.1 354.2L678.9 347.4M673.1 359.1L679.9 365.9M673.1 365.9L679.9 359.1M716.9 359.1L723.7 365.9M716.9 365.9L723.7 359.1M711.8 363.3L718.6 370.1M711.8 370.1L718.6 363.3M780.0 287.6L786.8 294.4M780.0 294.4L786.8 287.6M812.6 269.0L819.4 275.8M812.6 275.8L819.4 269.0M870.7 267.0L877.5 273.8M870.7 273.8L877.5 267.0M800.7 303.9L807.5 310.7M800.7 310.7L807.5 303.9M825.5 307.0L832.3 313.8M825.5 313.8L832.3 307.0M854.9 305.7L861.7 312.5M854.9 312.5L861.7 305.7M888.0 314.0L894.8 320.8M888.0 320.8L894.8 314.0M839.7 326.9L846.5 333.7M839.7 333.7L846.5 326.9M789.8 339.8L796.6 346.6M789.8 346.6L796.6 339.8M926.8 337.5L933.6 344.3M926.8 344.3L933.6 337.5M906.9 369.8L913.7 376.6M906.9 376.6L913.7 369.8M948.7 376.8L955.5 383.6M948.7 383.6L955.5 376.8M972.8 394.8L979.6 401.6M972.8 401.6L979.6 394.8M997.8 302.6L1004.6 309.4M997.8 309.4L1004.6 302.6M1025.7 260.0L1032.5 266.8M1025.7 266.8L1032.5 260.0M1054.6 316.8L1061.4 323.6M1054.6 323.6L1061.4 316.8" stroke="#0000ff" stroke-width="0.9" fill="none"/>
<path d="M158 154.0h4M573 154.0h-4M158 186.5h4M573 186.5h-4M158 219.0h4M573 219.0h-4M158 251.5h4M573 251.5h-4M158 284.0h4M573 284.0h-4M158 316.5h4M573 316.5h-4M158 349.0h4M573 349.0h-4M158 381.5h4M573 381.5h-4M158 414.0h4M573 414.0h-4M158.0 414v-4M158.0 154v4M261.8 414v-4M261.8 154v4M365.5 414v-4M365.5 154v4M469.2 414v-4M469.2 154v4M573.0 414v-4M573.0 154v4M656 154.0h4M1072 154.0h-4M656 191.1h4M1072 191.1h-4M656 228.3h4M1072 228.3h-4M656 265.4h4M1072 265.4h-4M656 302.6h4M1072 302.6h-4M656 339.7h4M1072 339.7h-4M656 376.9h4M1072 376.9h-4M656 414.0h4M1072 414.0h-4M656.0 414v-4M656.0 154v4M760.0 414v-4M760.0 154v4M864.0 414v-4M864.0 154v4M968.0 414v-4M968.0 154v4M1072.0 414v-4M1072.0 154v4" stroke="#222" stroke-width="0.9" fill="none" transform="translate(0.5,0.5)"/>
<g clip-path="url(#fig)">
<text x="152.8" y="157.4" font-size="12.3" text-anchor="end" textLength="31.8" lengthAdjust="spacingAndGlyphs" font-family="Liberation Sans" fill="#000" >0.001</text>
<text x="152.8" y="189.9" font-size="12.3" text-anchor="end" textLength="31.8" lengthAdjust="spacingAndGlyphs" font-family="Liberation Sans" fill="#000" >0.000</text>
<text x="152.8" y="222.4" font-size="12.3" text-anchor="end" textLength="41.4" lengthAdjust="spacingAndGlyphs" font-family="Liberation Sans" fill="#000" >−0.001</text>
<text x="152.8" y="254.9" font-size="12.3" text-anchor="end" textLength="41.4" lengthAdjust="spacingAndGlyphs" font-family="Liberation Sans" fill="#000" >−0.002</text>
<text x="152.8" y="287.4" font-size="12.3" text-anchor="end" textLength="41.4" lengthAdjust="spacingAndGlyphs" font-family="Liberation Sans" fill="#000" >−0.003</text>
<text x="152.8" y="319.9" font-size="12.3" text-anchor="end" textLength="41.4" lengthAdjust="spacingAndGlyphs" font-family="Liberation Sans" fill="#000" >−0.004</text>
<text x="152.8" y="352.4" font-size="12.3" text-anchor="end" textLength="41.4" lengthAdjust="spacingAndGlyphs" font-family="Liberation Sans" fill="#000" >−0.005</text>
<text x="152.8" y="384.9" font-size="12.3" text-anchor="end" textLength="41.4" lengthAdjust="spacingAndGlyphs" font-family="Liberation Sans" fill="#000" >−0.006</text>
<text x="152.8" y="417.4" font-size="12.3" text-anchor="end" textLength="41.4" lengthAdjust="spacingAndGlyphs" font-family="Liberation Sans" fill="#000" >−0.007</text>
<text x="158.5" y="427.9" font-size="12.3" text-anchor="middle" textLength="6.8" lengthAdjust="spacingAndGlyphs" font-family="Liberation Sans" fill="#000" >0</text>
<text x="656.5" y="427.9" font-size="12.3" text-anchor="middle" textLength="6.8" lengthAdjust="spacingAndGlyphs" font-family="Liberation Sans" fill="#000" >0</text>
<text x="262.25" y="427.9" font-size="12.3" text-anchor="middle" textLength="28.2" lengthAdjust="spacingAndGlyphs" font-family="Liberation Sans" fill="#000" >5000</text>
<text x="760.5" y="427.9" font-size="12.3" text-anchor="middle" textLength="28.2" lengthAdjust="spacingAndGlyphs" font-family="Liberation Sans" fill="#000" >5000</text>
<text x="366.0" y="427.9" font-size="12.3" text-anchor="middle" textLength="36.0" lengthAdjust="spacingAndGlyphs" font-family="Liberation Sans" fill="#000" >10000</text>
<text x="864.5" y="427.9" font-size="12.3" text-anchor="middle" textLength="36.0" lengthAdjust="spacingAndGlyphs" font-family="Liberation Sans" fill="#000" >10000</text>
<text x="469.75" y="427.9" font-size="12.3" text-anchor="middle" textLength="36.0" lengthAdjust="spacingAndGlyphs" font-family="Liberation Sans" fill="#000" >15000</text>
<text x="968.5" y="427.9" font-size="12.3" text-anchor="middle" textLength="36.0" lengthAdjust="spacingAndGlyphs" font-family="Liberation Sans" fill="#000" >15000</text>
<text x="573.5" y="427.9" font-size="12.3" text-anchor="middle" textLength="36.0" lengthAdjust="spacingAndGlyphs" font-family="Liberation Sans" fill="#000" >20000</text>
<text x="1072.5" y="427.9" font-size="12.3" text-anchor="middle" textLength="36.0" lengthAdjust="spacingAndGlyphs" font-family="Liberation Sans" fill="#000" >20000</text>
<text x="651.4" y="157.5" font-size="12.3" text-anchor="end" textLength="17.0" lengthAdjust="spacingAndGlyphs" font-family="Liberation Sans" fill="#000" >2.0</text>
<text x="651.4" y="194.64285714285714" font-size="12.3" text-anchor="end" textLength="17.0" lengthAdjust="spacingAndGlyphs" font-family="Liberation Sans" fill="#000" >1.5</text>
<text x="651.4" y="231.78571428571428" font-size="12.3" text-anchor="end" textLength="17.0" lengthAdjust="spacingAndGlyphs" font-family="Liberation Sans" fill="#000" >1.0</text>
<text x="651.4" y="268.92857142857144" font-size="12.3" text-anchor="end" textLength="17.0" lengthAdjust="spacingAndGlyphs" font-family="Liberation Sans" fill="#000" >0.5</text>
<text x="651.4" y="306.07142857142856" font-size="12.3" text-anchor="end" textLength="17.0" lengthAdjust="spacingAndGlyphs" font-family="Liberation Sans" fill="#000" >0.0</text>
<text x="651.4" y="343.2142857142857" font-size="12.3" text-anchor="end" textLength="26.6" lengthAdjust="spacingAndGlyphs" font-family="Liberation Sans" fill="#000" >−0.5</text>
<text x="651.4" y="380.3571428571429" font-size="12.3" text-anchor="end" textLength="26.6" lengthAdjust="spacingAndGlyphs" font-family="Liberation Sans" fill="#000" >−1.0</text>
<text x="651.4" y="417.5" font-size="12.3" text-anchor="end" textLength="26.6" lengthAdjust="spacingAndGlyphs" font-family="Liberation Sans" fill="#000" >−1.5</text>
<text x="365.5" y="445.2" font-size="12.3" text-anchor="middle" textLength="121.0" lengthAdjust="spacingAndGlyphs" font-family="Liberation Sans" fill="#000" >spin echo length (A)</text>
<text x="864.5" y="445.2" font-size="12.3" text-anchor="middle" textLength="121.0" lengthAdjust="spacingAndGlyphs" font-family="Liberation Sans" fill="#000" >spin echo length (A)</text>
<g transform="translate(98.4,284.1) rotate(-90)"><text x="0" y="0" font-size="12.3" text-anchor="middle" textLength="84.5" lengthAdjust="spacingAndGlyphs" font-family="Liberation Sans" fill="#000" >(Log (P/P<tspan font-size="8.5" dy="2.5">0</tspan><tspan dy="-2.5">))/λ</tspan><tspan font-size="8.5" dy="-4.5">2</tspan></text></g>
<g transform="translate(614.9,285.4) rotate(-90)"><text x="0" y="0" font-size="12.3" text-anchor="middle" textLength="92.8" lengthAdjust="spacingAndGlyphs" font-family="Liberation Sans" fill="#000" >residuals (P/P0)</text></g>
</g>
<g clip-path="url(#cr)"><text x="661.0" y="410.6" font-size="12.3" text-anchor="start" textLength="99.2" lengthAdjust="spacingAndGlyphs" font-family="Liberation Sans" fill="#000" >chisq=0.373(89)</text></g>
</svg>
<svg class="a" style="left:6px;top:5px" width="28" height="26" viewBox="6 5 28 26"><defs><linearGradient id="ibl" x1="0" y1="0" x2="0" y2="1"><stop offset="0" stop-color="#4a60f0"/><stop offset="0.3" stop-color="#3a8cff"/><stop offset="1" stop-color="#2aa0ff"/></linearGradient><linearGradient id="iteal" x1="0" y1="0" x2="1" y2="1"><stop offset="0" stop-color="#2a7ac8"/><stop offset="0.5" stop-color="#156b6e"/><stop offset="1" stop-color="#3a4a7a"/></linearGradient><linearGradient id="inavy" x1="0" y1="0" x2="0" y2="1"><stop offset="0" stop-color="#5a4a8a"/><stop offset="1" stop-color="#0a2a8a"/></linearGradient></defs><polygon points="9,19.2 14.6,20 14.6,27.4 9,26.7" fill="url(#ibl)"/><polygon points="14.4,27.4 16.6,14.6 20.6,21.3 16.5,27.6" fill="#050608"/><polygon points="16.4,14.9 23,8.4 26.4,12.8 20.6,21.3" fill="url(#iteal)"/><polygon points="20.5,21.2 25.2,14.3 28.9,21 23.8,26.9" fill="url(#inavy)"/><polygon points="26.2,12.6 28.9,10.8 28.9,20.6 25.6,15" fill="#1d7a8a"/><polygon points="25.2,14.3 28.9,21 23.8,26.9 25.5,19" fill="#07090f"/></svg>
<svg class="a" style="left:10px;top:64px" width="20" height="19" viewBox="10 64 20 19"><defs><linearGradient id="scg" x1="0" y1="0" x2="0" y2="1"><stop offset="0" stop-color="#ffffff"/><stop offset="1" stop-color="#c8e0f0"/></linearGradient></defs><path d="M16.3 67.2 H26.7 L23.6 79.6 H13.4 Z" fill="url(#scg)" stroke="#6aa6cf" stroke-width="1"/><path d="M12.4 79.5 Q12.6 77.8 14.2 77.8 H21.2 L20.6 79.8 H13 Z" fill="#e6f2fa" stroke="#5d9ccb" stroke-width="1"/><path d="M25.6 67.4 Q27.8 67 27.4 69 L26.3 69.6" fill="none" stroke="#6aa6cf" stroke-width="1"/></svg>
<svg class="a" style="left:33px;top:64px" width="20" height="20" viewBox="33 64 20 20"><defs><linearGradient id="rfg" x1="0" y1="0" x2="0" y2="1"><stop offset="0" stop-color="#8fe466"/><stop offset="0.6" stop-color="#2aa52a"/><stop offset="1" stop-color="#078a07"/></linearGradient></defs><path d="M38.3 70.2 A5.5 5.5 0 1 0 46.4 69.9" fill="none" stroke="url(#rfg)" stroke-width="3.2"/><path d="M44.0 66.8 L49.0 67.1 L48.4 68.6 L44.2 72.6 Z" fill="#86de5e"/></svg>
<svg class="a" style="left:62px;top:62px" width="26" height="24" viewBox="62 62 26 24"><defs><linearGradient id="ckg" x1="0" y1="0" x2="0" y2="1"><stop offset="0" stop-color="#6ad06a"/><stop offset="0.5" stop-color="#18a818"/><stop offset="1" stop-color="#0a960a"/></linearGradient><linearGradient id="ckb" x1="0" y1="0" x2="0" y2="1"><stop offset="0" stop-color="#f6f6f6"/><stop offset="0.55" stop-color="#ececec"/><stop offset="0.56" stop-color="#dedede"/><stop offset="1" stop-color="#eeeeee"/></linearGradient></defs><rect x="63.7" y="64.7" width="21.6" height="18.8" rx="3" fill="url(#ckb)" stroke="#a3a3a3" stroke-width="1"/><rect x="64.7" y="65.7" width="19.6" height="16.8" rx="2" fill="none" stroke="#ffffff" stroke-width="0.8"/><path d="M67.6 74.6 L72.2 79.4 L80.6 67.5" fill="none" stroke="#107a10" stroke-width="3.7" stroke-linecap="round" stroke-linejoin="round"/><path d="M67.6 74.6 L72.2 79.4 L80.6 67.5" fill="none" stroke="url(#ckg)" stroke-width="2.4" stroke-linecap="round" stroke-linejoin="round"/><path d="M67.8 74.4 L69.6 76.2 M77.6 71.4 L80.4 67.6" fill="none" stroke="#9ee09e" stroke-width="1.2" stroke-linecap="round"/></svg>
<svg class="a" style="left:88px;top:64px" width="19" height="19" viewBox="88 64 19 19"><defs></defs><path d="M90.6 67.0 Q97 71.5 104.0 79.6" fill="none" stroke="#b02a1c" stroke-width="2.1" stroke-linecap="round"/><path d="M102.8 67.6 Q96 73 91.4 79.8" fill="none" stroke="#b02a1c" stroke-width="2.3" stroke-linecap="round"/><path d="M91.0 67.3 Q96.5 71.3 103.4 79.0" fill="none" stroke="#e0564a" stroke-width="1.0" stroke-linecap="round"/><path d="M102.5 67.9 Q96 73 91.7 79.3" fill="none" stroke="#dd4436" stroke-width="1.1" stroke-linecap="round"/><path d="M91.4 67.4 L96 70.6" stroke="#f2a096" stroke-width="1.1" stroke-linecap="round"/></svg>
<svg class="a" style="left:66px;top:99px" width="14" height="14" viewBox="66 99 14 14"><defs></defs><path d="M69.2 102.2 L77.60000000000001 109.8 M77.60000000000001 102.2 L69.2 109.8" stroke="#6b6b6b" stroke-width="1.25"/></svg>
<svg class="a" style="left:113px;top:494px" width="14" height="14" viewBox="113 494 14 14"><defs></defs><path d="M116.3 497.2 L124.7 504.8 M124.7 497.2 L116.3 504.8" stroke="#6b6b6b" stroke-width="1.25"/></svg>
<svg class="a" style="left:12px;top:450px" width="27" height="27" viewBox="12 450 27 27"><defs><linearGradient id="hmw" x1="0" y1="0" x2="1" y2="0"><stop offset="0" stop-color="#c8d2d4"/><stop offset="0.4" stop-color="#ffffff"/><stop offset="1" stop-color="#d8e0e0"/></linearGradient><linearGradient id="hmd" x1="0" y1="0" x2="1" y2="1"><stop offset="0" stop-color="#ffe08a"/><stop offset="1" stop-color="#eea52a"/></linearGradient></defs><rect x="18.2" y="453" width="3.2" height="4.5" fill="#f2b860" stroke="#d99a8a" stroke-width="0.6"/><path d="M18.3 474.5 V460.8 L25.3 455.2 L32 460.8 V474.5 Z" fill="url(#hmw)" stroke="#8fa6a8" stroke-width="1"/><path d="M21.6 474 V465 Q21.6 462.3 25 462.3 Q28.6 462.3 28.6 465 V474 Z" fill="url(#hmd)" stroke="#c0705a" stroke-width="0.8"/><path d="M14.6 463.2 L25.3 453.4 L35.6 462.6" fill="none" stroke="#a9203d" stroke-width="3" stroke-linejoin="miter"/></svg>
<svg class="a" style="left:43px;top:451px" width="25" height="25" viewBox="43 451 25 25"><defs><radialGradient id="ncg" cx="0.4" cy="0.3" r="0.75"><stop offset="0" stop-color="#9a9a9a"/><stop offset="0.6" stop-color="#6e6e6e"/><stop offset="1" stop-color="#5a5a5a"/></radialGradient></defs><circle cx="55.8" cy="463.1" r="10.3" fill="url(#ncg)" stroke="#6a6a6a" stroke-width="0.8"/><path d="M50.199999999999996 463.1 L55.199999999999996 458.3 V461.2 H60.8 V465 H55.199999999999996 V467.9 Z" fill="#dcdcdc"/></svg>
<svg class="a" style="left:74px;top:451px" width="25" height="25" viewBox="74 451 25 25"><defs><radialGradient id="ncg" cx="0.4" cy="0.3" r="0.75"><stop offset="0" stop-color="#9a9a9a"/><stop offset="0.6" stop-color="#6e6e6e"/><stop offset="1" stop-color="#5a5a5a"/></radialGradient></defs><circle cx="86.9" cy="463.1" r="10.3" fill="url(#ncg)" stroke="#6a6a6a" stroke-width="0.8"/><path d="M92.5 463.1 L87.5 458.3 V461.2 H81.9 V465 H87.5 V467.9 Z" fill="#dcdcdc"/></svg>
<svg class="a" style="left:112px;top:450px" width="27" height="27" viewBox="112 450 27 27"><defs></defs><path d="M125.4 455 V471.2 M117 463 H134" stroke="#1d5f80" stroke-width="2.4"/><path d="M125.4 451.8 L129.2 456.6 H121.6 Z M125.4 474.3 L129.2 469.5 H121.6 Z M114 463 L118.8 459.2 V466.8 Z M136.8 463 L132 459.2 V466.8 Z" fill="#1d5f80"/></svg>
<svg class="a" style="left:143px;top:450px" width="28" height="26" viewBox="143 450 28 26"><defs></defs><rect x="149.5" y="460.7" width="17.3" height="11.6" fill="#fbfaff" stroke="#98ced8" stroke-width="1"/><circle cx="153.2" cy="464.1" r="6.9" fill="rgba(200,232,236,0.85)" stroke="#b4dde3" stroke-width="1"/><path d="M152.3 463.3 H158.2 M152.3 465.5 H158.2" stroke="#3b8ba2" stroke-width="1"/><path d="M152.3 467.8 H158.2" stroke="#5a9fb0" stroke-width="1.6"/><path d="M159.3 458.6 L168.4 454.6" stroke="#e59a3a" stroke-width="3.4" stroke-linecap="round"/><path d="M159.6 458.0 L168.2 454.3" stroke="#f6c66a" stroke-width="1.4" stroke-linecap="round"/></svg>
<svg class="a" style="left:183px;top:450px" width="27" height="27" viewBox="183 450 27 27"><defs></defs><rect x="186.7" y="452.7" width="18.6" height="20.6" fill="#ffffff" stroke="#8c8c8c" stroke-width="1"/><rect x="189" y="455.3" width="14" height="15.4" fill="#4b78cf"/><rect x="190.9" y="458.6" width="10.2" height="8.6" fill="#ffffff" stroke="#2b4a8c" stroke-width="0.6"/><path d="M191.2 464.8 L195 461.3 L198 464.8 L201 461.3" fill="none" stroke="#222" stroke-width="0.9"/><path d="M196.1 452.1 L199.3 456.8 H192.9 Z M196.1 474 L199.3 469.4 H192.9 Z M185.1 463 L189.6 459.8 V466.4 Z M207 463 L202.5 459.8 V466.4 Z" fill="#55e055" stroke="#35a835" stroke-width="0.6"/></svg>
<svg class="a" style="left:213px;top:450px" width="28" height="27" viewBox="213 450 28 27"><defs><linearGradient id="flb" x1="0" y1="0" x2="1" y2="1"><stop offset="0" stop-color="#4c8cac"/><stop offset="0.5" stop-color="#2f6a8c"/><stop offset="1" stop-color="#2a6284"/></linearGradient><linearGradient id="fll" x1="0" y1="0" x2="0" y2="1"><stop offset="0" stop-color="#d8e4ea"/><stop offset="1" stop-color="#9ab6c6"/></linearGradient><linearGradient id="fls" x1="0" y1="0" x2="1" y2="0"><stop offset="0" stop-color="#e8eef0"/><stop offset="1" stop-color="#8aa0aa"/></linearGradient></defs><path d="M216.6 452.4 H237.2 Q238.8 452.4 238.8 454 V473.2 Q238.8 474.8 237.2 474.8 H217.4 L215 472.6 V454 Q215 452.4 216.6 452.4 Z" fill="url(#flb)"/><rect x="219" y="453" width="15.8" height="9.2" fill="url(#fll)"/><rect x="219" y="453" width="15.8" height="1.8" fill="#c47a42"/><path d="M223.3 457.3 H233 M223.3 459.5 H233" stroke="#1f4a6c" stroke-width="1"/><rect x="221.8" y="467.3" width="10.7" height="7.2" fill="url(#fls)"/><rect x="223.5" y="468.1" width="2.5" height="5" fill="#18284a"/><circle cx="217.3" cy="455.3" r="0.7" fill="#fff"/><circle cx="236.5" cy="455.3" r="0.7" fill="#fff"/></svg>
</body></html>
